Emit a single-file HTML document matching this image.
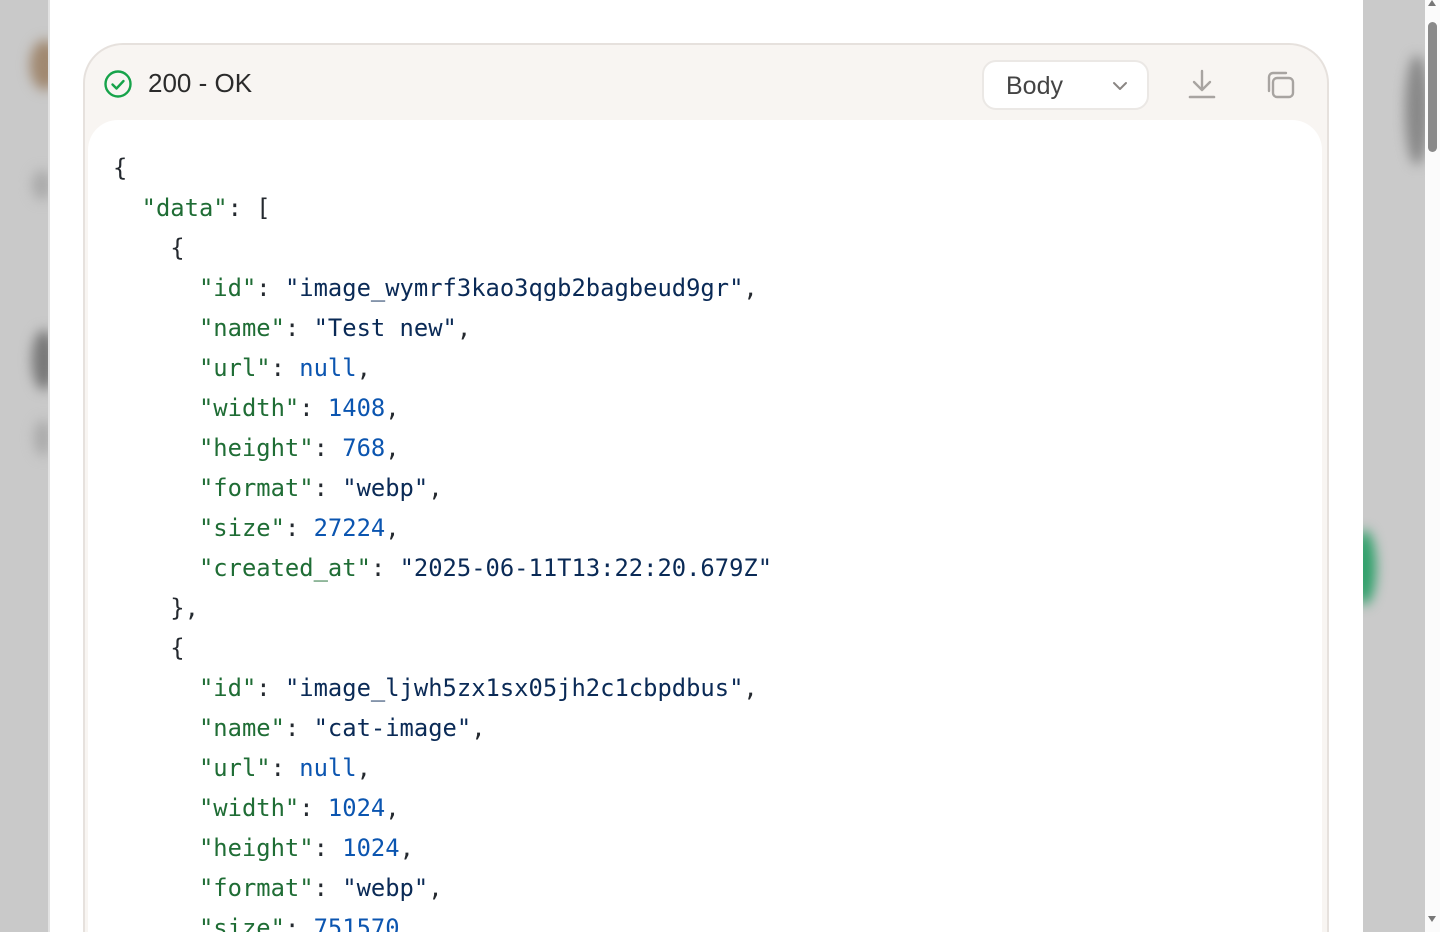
<!DOCTYPE html>
<html><head><style>
html,body{margin:0;padding:0;width:1440px;height:932px;overflow:hidden;background:#cbcbcb;font-family:"Liberation Sans",sans-serif}
.wrap{position:absolute;left:0;top:0;width:1440px;height:932px;overflow:hidden}
.lg{position:absolute;left:0;top:0;width:48px;height:932px;background:#c9c9c9}
.blob{position:absolute;border-radius:50%;filter:blur(6px)}
.modal{position:absolute;left:48px;top:0;width:1313px;height:932px;background:#fff;border-left:2px solid #e2e2e2}
.rg{position:absolute;left:1362px;top:0;width:63px;height:932px;background:#cacaca}
.sb{position:absolute;left:1425px;top:0;width:15px;height:932px;background:#fbfbfb}
.thumb{position:absolute;top:22px;width:9px;height:130px;border-radius:5px;background:#8a8a8a}
.card{position:absolute;left:83px;top:43px;width:1242px;height:887px;background:#f8f5f2;border:2px solid #e6e1dd;border-bottom:none;border-radius:40px 40px 0 0;overflow:hidden}
.code{position:absolute;left:3px;top:75px;width:1234px;height:820px;background:#fff;border-radius:30px 30px 0 0}
.status{position:absolute;left:148px;top:68px;font-size:26px;color:#2b2b2b}
.sel{position:absolute;left:982px;top:60px;width:167px;height:50px;background:#fff;border:2px solid #ebe8e5;border-radius:14px;box-sizing:border-box}
.sel span{position:absolute;left:22px;top:10px;font-size:25px;color:#444}
pre{position:absolute;left:113px;top:148px;height:784px;overflow:hidden;margin:0;font-family:"DejaVu Sans Mono","Liberation Mono",monospace;font-size:23.8px;line-height:40px;color:#24292f}
.k{color:#1f6d35}.s{color:#0a2a56}.n{color:#0b55b0}
</style></head><body><div class="wrap">
<div class="lg"></div>
<div class="blob" style="left:30px;top:40px;width:30px;height:50px;background:#a08870"></div>
<div class="blob" style="left:32px;top:170px;width:20px;height:30px;background:#aaa"></div>
<div class="blob" style="left:32px;top:330px;width:24px;height:60px;background:#777"></div>
<div class="blob" style="left:34px;top:420px;width:18px;height:36px;background:#aaa"></div>
<div class="rg"></div>
<div class="blob" style="left:1405px;top:55px;width:24px;height:110px;background:#888"></div>
<div class="blob" style="left:1352px;top:530px;width:24px;height:75px;background:#2fa06a"></div>
<div class="modal"></div>
<div class="sb"><div class="thumb" style="left:3px"></div><div style="position:absolute;left:3px;top:0;width:0;height:0;border-left:4px solid transparent;border-right:4px solid transparent;border-bottom:6px solid #777"></div><div style="position:absolute;left:3px;top:916px;width:0;height:0;border-left:4px solid transparent;border-right:4px solid transparent;border-top:6px solid #777"></div></div>
<div class="card"><div class="code"></div></div>
<svg style="position:absolute;left:103px;top:69px" width="30" height="30" viewBox="0 0 30 30"><circle cx="15" cy="15" r="12.5" fill="none" stroke="#16a34a" stroke-width="2.4"/><path d="M9.5 15.5l4 4 7-7.5" fill="none" stroke="#16a34a" stroke-width="2.4" stroke-linecap="round" stroke-linejoin="round"/></svg>
<div class="status">200 - OK</div>
<div class="sel"><span>Body</span><svg style="position:absolute;left:128px;top:18px" width="16" height="12" viewBox="0 0 16 12"><path d="M2 3l6 6 6-6" fill="none" stroke="#8a8683" stroke-width="2" stroke-linecap="round" stroke-linejoin="round"/></svg></div>
<svg style="position:absolute;left:1186px;top:68px" width="32" height="32" viewBox="0 0 32 32"><path d="M16 3v19M8 14l8 8 8-8" fill="none" stroke="#a8a4a1" stroke-width="2.4" stroke-linecap="round" stroke-linejoin="round"/><path d="M4 29h24" stroke="#a8a4a1" stroke-width="2.6" stroke-linecap="round"/></svg>
<svg style="position:absolute;left:1264px;top:69px" width="32" height="32" viewBox="0 0 32 32"><rect x="9" y="9" width="20" height="19" rx="4" fill="none" stroke="#a8a4a1" stroke-width="2.4"/><path d="M5 22V8a4 4 0 0 1 4-4h13" fill="none" stroke="#a8a4a1" stroke-width="2.4" stroke-linecap="round"/></svg>
<pre>{
  <span class="k">"data"</span>: [
    {
      <span class="k">"id"</span>: <span class="s">"image_wymrf3kao3qgb2bagbeud9gr"</span>,
      <span class="k">"name"</span>: <span class="s">"Test new"</span>,
      <span class="k">"url"</span>: <span class="n">null</span>,
      <span class="k">"width"</span>: <span class="n">1408</span>,
      <span class="k">"height"</span>: <span class="n">768</span>,
      <span class="k">"format"</span>: <span class="s">"webp"</span>,
      <span class="k">"size"</span>: <span class="n">27224</span>,
      <span class="k">"created_at"</span>: <span class="s">"2025-06-11T13:22:20.679Z"</span>
    },
    {
      <span class="k">"id"</span>: <span class="s">"image_ljwh5zx1sx05jh2c1cbpdbus"</span>,
      <span class="k">"name"</span>: <span class="s">"cat-image"</span>,
      <span class="k">"url"</span>: <span class="n">null</span>,
      <span class="k">"width"</span>: <span class="n">1024</span>,
      <span class="k">"height"</span>: <span class="n">1024</span>,
      <span class="k">"format"</span>: <span class="s">"webp"</span>,
      <span class="k">"size"</span>: <span class="n">751570</span>,
</pre>
</div></body></html>
